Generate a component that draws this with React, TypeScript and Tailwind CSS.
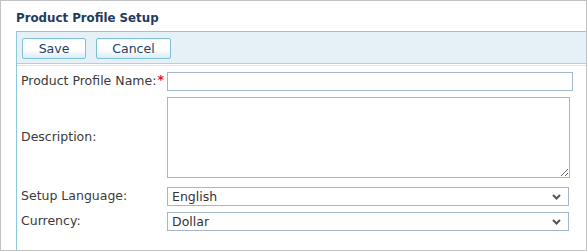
import React from "react";

function Chevron() {
  return (
    <svg width="9" height="6" viewBox="0 0 9 6" className="absolute right-[8px] top-[7px] pointer-events-none">
      <path d="M1 1 L4.5 4.5 L8 1" stroke="#555" strokeWidth="2" fill="none" />
    </svg>
  );
}

function Btn({ label, w }: { label: string; w: string }) {
  return (
    <button
      className={`h-[21px] ${w} rounded-[2px] border border-[#7dc2d5] bg-[linear-gradient(to_bottom,#ffffff_0%,#ffffff_60%,#d7ecf3_100%)] text-[12.5px] leading-[19px] text-[#1d3f66] text-center`}
    >
      {label}
    </button>
  );
}

export default function App() {
  return (
    <div className="w-[587px] h-[251px] border border-[#c2c2c2] bg-white flex flex-col text-[#333]" style={{ fontFamily: "Tahoma, \"DejaVu Sans\", sans-serif" }}>
      <div className="h-[30px] pl-[15px] pt-[9px] text-[11.8px] font-bold leading-[16px] text-[#1f3b5e]">
        Product Profile Setup
      </div>
      <div className="ml-[15px] flex-1 border-l border-t border-[#8ccbdb] flex flex-col">
        <div className="h-[31px] bg-[#e5f1f6] flex items-center gap-[10px] pl-[5px] pt-[1px]">
          <Btn label="Save" w="w-[64px]" />
          <Btn label="Cancel" w="w-[75px]" />
        </div>
        <div className="h-[1px] bg-[#a9d5e1]" />
        <div className="h-[1px] bg-white" />
        <div className="h-[1px] bg-[#d3e9ef]" />
        <div className="pt-[6px] grid grid-cols-[150px_1fr] text-[12.5px] text-[#3a3a3a]">
          <div className="h-[19px] flex items-center pl-[4px]">
            Product Profile Name:<span className="text-[#e0141e] font-bold ml-[1px] -mt-[3px]">*</span>
          </div>
          <div>
            <input className="block w-[406px] h-[19px] border border-[#a3b6cb] outline-none" />
          </div>
          <div className="h-[6px] col-span-2" />
          <div className="flex items-center pl-[4px]">Description:</div>
          <div>
            <textarea className="block w-[403px] h-[81px] border border-[#a3b6cb] outline-none" />
          </div>
          <div className="h-[9px] col-span-2" />
          <div className="h-[19px] flex items-center pl-[4px]">Setup Language:</div>
          <div className="relative w-[402px]">
            <select className="appearance-none block w-[402px] h-[19px] border border-[#a3b6cb] bg-white pl-[4px] text-[12.5px] leading-[17px] text-[#333] outline-none">
              <option>English</option>
            </select>
            <Chevron />
          </div>
          <div className="h-[6px] col-span-2" />
          <div className="h-[19px] flex items-center pl-[4px]">Currency:</div>
          <div className="relative w-[402px]">
            <select className="appearance-none block w-[402px] h-[19px] border border-[#a3b6cb] bg-white pl-[4px] text-[12.5px] leading-[17px] text-[#333] outline-none">
              <option>Dollar</option>
            </select>
            <Chevron />
          </div>
        </div>
      </div>
    </div>
  );
}
